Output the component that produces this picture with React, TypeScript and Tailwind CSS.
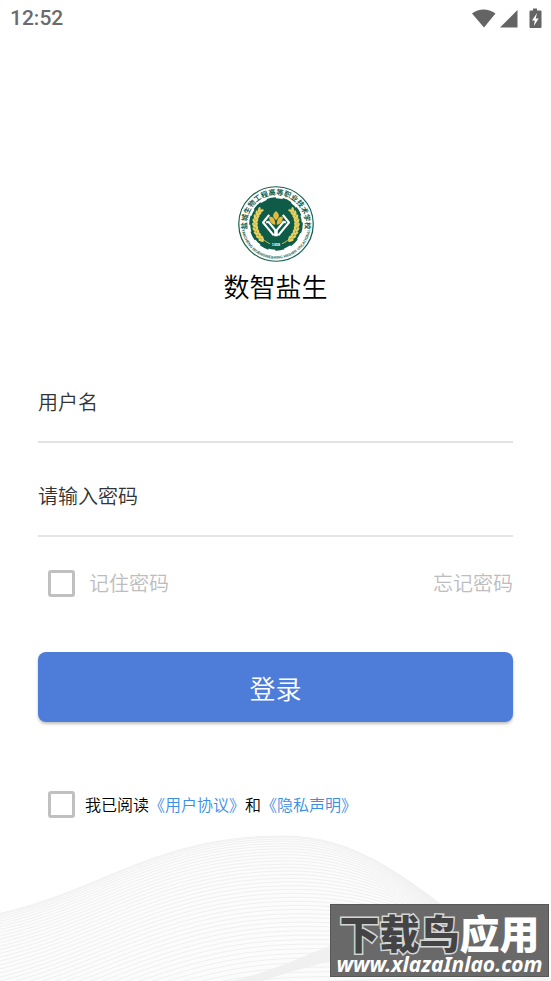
import { useState } from "react";

// Outer and inner edge of the wave; the lines between are blended from them
const waveTop = [-40, 920, 90, 905, 140, 836, 283, 836, 350, 836, 400, 870, 480, 936];
const waveBottom = [-40, 1075, 80, 1050, 170, 985, 300, 982, 380, 980, 440, 975, 560, 985];

const waveLines = Array.from({ length: 40 }, (_, i) => {
    const t = Math.pow(i / 39, 1.3);
    const p = waveTop.map((v, k) => (v + (waveBottom[k] - v) * t).toFixed(1));
    return `M${p[0]} ${p[1]}C${p.slice(2, 8).join(" ")} ${p.slice(8).join(" ")}`;
});

const grains = [0, 1, 2, 3, 4, 5, 6, 7, 8];

export default function App() {
    const [remember, setRemember] = useState(false);
    const [agreed, setAgreed] = useState(false);

    return (
        <div lang="zh-CN" className="relative min-h-screen overflow-hidden bg-white font-['Noto_Sans_CJK_SC',sans-serif]">
            <Wave />
            <StatusBar />

            <main className="relative px-[38px] pt-[148px]">
                <div className="flex flex-col items-center">
                    <Logo />
                    <h1 className="mt-1.5 text-[26px] leading-9 font-[350] text-black">数智盐生</h1>
                </div>

                <form className="mt-[45px]" onSubmit={(e) => e.preventDefault()}>
                    <Field type="text" label="用户名" />
                    <Field type="password" label="请输入密码" />

                    <div className="mt-7 flex items-center justify-between pl-[10px] text-[20px] leading-9 font-[350] text-[#bdbdbd]">
                        <label className="flex items-center gap-[14px]">
                            <Checkbox checked={remember} onChange={setRemember} />
                            记住密码
                        </label>
                        <a href="#forgot">忘记密码</a>
                    </div>

                    <button
                        type="submit"
                        className="mt-[51px] h-[70px] w-full rounded-lg bg-[#4d7dd9] text-[26px] font-[350] text-white shadow-[0_2px_3px_rgba(0,0,0,0.25)]"
                    >
                        登录
                    </button>

                    <div className="mt-16 flex items-center gap-[10px] pl-[10px] text-[16px] leading-9 font-[350] text-black">
                        <Checkbox id="agree" checked={agreed} onChange={setAgreed} />
                        <label htmlFor="agree">
                            我已阅读
                            <a href="#terms" className="text-[#3a8ee6]">《用户协议》</a>
                            和
                            <a href="#privacy" className="text-[#3a8ee6]">《隐私声明》</a>
                        </label>
                    </div>
                </form>
            </main>

            <Watermark />
        </div>
    );
}

function StatusBar() {
    return (
        <header className="relative flex h-[38px] items-center justify-between pl-[10px] pr-[7px] font-[Roboto,sans-serif] text-[21px] font-medium text-[#6b6b6b]">
            <span>12:52</span>
            <svg className="h-[22px] w-[72px]" viewBox="0 0 72 22" fill="#646464">
                <path d="M0 5.500C7 0.200 16 0.200 23.500 5.500L12 19.500Z" />
                <path d="M45.500 2v17.500H28Z" />
                <path d="M61 0.500h4v2h3.500a1 1 0 0 1 1 1V19a1 1 0 0 1-1 1h-10a1 1 0 0 1-1-1V3.500a1 1 0 0 1 1-1h2.500z" />
                <path d="M65 5l-5 7.500h2.800l-1 5.500 4.900-7.500h-3z" fill="#fff" />
            </svg>
        </header>
    );
}

function Field({ type, label }: { type: string; label: string }) {
    return (
        <div className="h-[94px] border-b-2 border-[#e3e3e3] pt-[34px]">
            <input
                type={type}
                aria-label={label}
                placeholder={label}
                className="h-9 w-full bg-transparent text-[20px] font-[350] text-[#333] outline-none placeholder:text-[#333]"
            />
        </div>
    );
}

function Checkbox({ id, checked, onChange }: { id?: string; checked: boolean; onChange: (v: boolean) => void }) {
    return (
        <input
            id={id}
            type="checkbox"
            checked={checked}
            onChange={(e) => onChange(e.target.checked)}
            className="size-[27px] shrink-0 appearance-none rounded-[3px] border-3 border-[#c0c0c0] bg-white checked:border-[#4d7dd9] checked:bg-[#4d7dd9]"
        />
    );
}

function Logo() {
    return (
        <svg className="size-[76px] overflow-visible" viewBox="0 0 100 100">
            <defs>
                <path id="sealTop" d="M13.600 62A38.300 38.300 0 1 1 86.400 62" />
                <path id="sealBottom" d="M5 58A45.700 45.700 0 0 0 95 58" />
            </defs>
            <circle cx="50" cy="50" r="49" fill="#fff" stroke="#17604c" strokeWidth="1.600" />
            <circle cx="50" cy="50" r="34" fill="#0e5b47" />
            <circle cx="50" cy="50" r="34" fill="none" stroke="#0e5b47" strokeWidth="2.400" strokeDasharray="12 9" />
            <text fontSize="9.500" fontWeight="700" fill="#17604c" className="font-['Noto_Sans_CJK_SC',sans-serif]">
                <textPath href="#sealTop" startOffset="50%" textAnchor="middle">盐城生物工程高等职业技术学校</textPath>
            </text>
            <text fontSize="5" fontWeight="700" fill="#17604c" className="font-['Liberation_Sans',sans-serif]">
                <textPath href="#sealBottom" startOffset="50%" textAnchor="middle">
                    YANCHENG BIOENGINEERING HIGHER VOCATIONAL
                </textPath>
            </text>

            {/* wheat ears */}
            {[1, -1].map((side) => (
                <g key={side} transform={side === 1 ? undefined : "translate(100 0) scale(-1 1)"}>
                    <path d="M31 30C18 44 21 66 42 76" fill="none" stroke="#e0c955" strokeWidth="1.200" />
                    {grains.map((i) => (
                        <g key={i} transform={`rotate(${-i * 11} 50 50) translate(31 31)`} fill="#e6cf5c">
                            <ellipse cx="-3" cy="1" rx="1.700" ry="3.800" transform="rotate(15)" />
                            <ellipse cx="1.500" cy="1" rx="1.600" ry="3.600" transform="rotate(65)" />
                        </g>
                    ))}
                </g>
            ))}

            {/* hands and sprout */}
            <g fill="none" stroke="#fff" strokeWidth="2.800" strokeLinejoin="round">
                <path d="M41 38L33 48L47 65M37 48L40 47L49 58V66" />
                <path d="M59 38L67 48L53 65M63 48L60 47L51 58V66" />
            </g>
            <g fill="#e6b93c">
                <path d="M50 33c5 4 5 8 0 12c-5-4-5-8 0-12z" />
                <path d="M41 40c6 0 8 4 8 11c-6-1-8-5-8-11z" />
                <path d="M59 40c-6 0-8 4-8 11c6-1 8-5 8-11z" />
            </g>
            <text x="50" y="79" fontSize="5" fontWeight="700" textAnchor="middle" fill="#fff" className="font-['Liberation_Sans',sans-serif]">1958</text>
        </svg>
    );
}

function Wave() {
    return (
        <svg className="absolute bottom-0 left-0 h-[161px] w-full" viewBox="0 820 551 161" preserveAspectRatio="none" fill="none">
            <defs>
                <linearGradient id="bandFade" gradientUnits="userSpaceOnUse" x1="320" y1="0" x2="551" y2="0">
                    <stop offset="0" stopColor="#f0f0f0" />
                    <stop offset="1" stopColor="#fdfdfd" />
                </linearGradient>
            </defs>
            <path d={`${waveLines[0]}L551 945V981H0Z`} fill="#fcfcfc" />
            {waveLines.map((d, i) => (
                <path key={i} d={d} stroke="#f0f0f0" strokeWidth="1" />
            ))}
            <path d="M232 981C262 974 286 964 312 953C360 934 410 915 460 906L551 900V925C460 930 350 952 262 981Z" fill="url(#bandFade)" />
        </svg>
    );
}

function Watermark() {
    return (
        <aside className="absolute right-[2px] bottom-1 flex h-[73px] w-[219px] flex-col items-center justify-end border border-[#575757] bg-[#696969] text-white">
            <p className="text-[40px] leading-10 font-black whitespace-nowrap">
                <span className="text-[#444] [paint-order:stroke_fill] [-webkit-text-stroke:3px_#d5d5d5]">下载鸟</span>应用
            </p>
            <p className="font-['Noto_Sans',sans-serif] text-[21px] leading-6 font-bold whitespace-nowrap italic">www.xlazaInlao.com</p>
        </aside>
    );
}
